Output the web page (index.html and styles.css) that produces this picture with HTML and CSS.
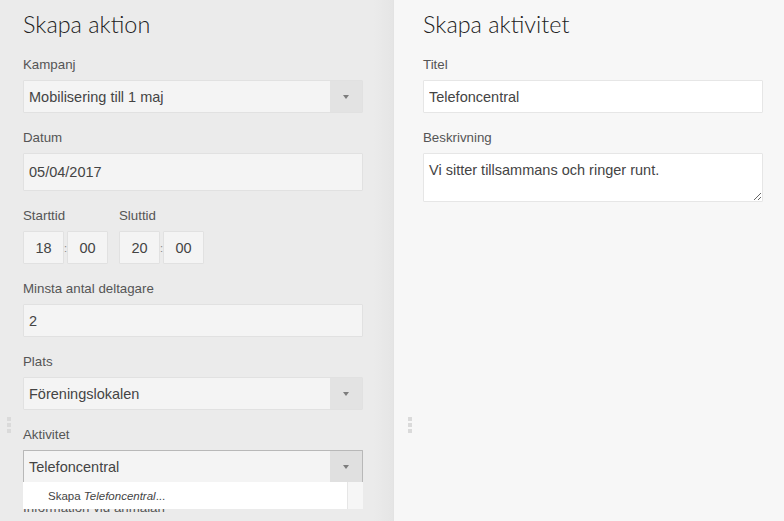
FILE: index.html
```html
<!DOCTYPE html>
<html lang="sv">
<head>
<meta charset="utf-8">
<title>Skapa aktion</title>
<link rel="stylesheet" href="styles.css">
</head>
<body>
<div class="app">
  <section class="panel panel-left">
    <div class="handle"><span></span><span></span><span></span></div>
    <h1 class="title">Skapa aktion</h1>

    <div class="field">
      <label class="label">Kampanj</label>
      <div class="select">
        <div class="select-value">Mobilisering till 1 maj</div>
        <div class="select-arrow"><span class="caret"></span></div>
      </div>
    </div>

    <div class="field">
      <label class="label">Datum</label>
      <input class="input input-date" type="text" value="05/04/2017" readonly>
    </div>

    <div class="field time-row">
      <div class="time-group">
        <label class="label">Starttid</label>
        <div class="time-inputs">
          <input class="input time-box" type="text" value="18" readonly>
          <span class="colon">:</span>
          <input class="input time-box" type="text" value="00" readonly>
        </div>
      </div>
      <div class="time-group">
        <label class="label">Sluttid</label>
        <div class="time-inputs">
          <input class="input time-box" type="text" value="20" readonly>
          <span class="colon">:</span>
          <input class="input time-box" type="text" value="00" readonly>
        </div>
      </div>
    </div>

    <div class="field">
      <label class="label">Minsta antal deltagare</label>
      <input class="input" type="text" value="2" readonly>
    </div>

    <div class="field">
      <label class="label">Plats</label>
      <div class="select">
        <div class="select-value">Föreningslokalen</div>
        <div class="select-arrow"><span class="caret"></span></div>
      </div>
    </div>

    <div class="field">
      <label class="label">Aktivitet</label>
      <div class="select select-open">
        <div class="select-value">Telefoncentral</div>
        <div class="select-arrow"><span class="caret"></span></div>
        <div class="menu">
          <div class="menu-item">Skapa <em>Telefoncentral</em>...</div>
          <div class="menu-scroll"></div>
        </div>
      </div>
    </div>

    <div class="field">
      <label class="label">Information vid anmälan</label>
    </div>
  </section>

  <section class="panel panel-right">
    <div class="handle"><span></span><span></span><span></span></div>
    <h1 class="title">Skapa aktivitet</h1>

    <div class="field">
      <label class="label">Titel</label>
      <input class="input input-white" type="text" value="Telefoncentral" readonly>
    </div>

    <div class="field">
      <label class="label">Beskrivning</label>
      <textarea class="input input-white textarea" readonly>Vi sitter tillsammans och ringer runt.</textarea>
    </div>
  </section>
</div>
</body>
</html>
```

FILE: styles.css
```css
html, body {
  margin: 0;
  padding: 0;
  height: 100%;
  overflow: hidden;
}

body {
  font-family: "Liberation Sans", Arial, sans-serif;
  color: #444;
}

.app {
  display: flex;
  height: 100%;
}

.panel {
  position: relative;
  box-sizing: border-box;
  height: 100%;
}

.panel-left {
  width: 393px;
  flex: none;
  padding: 0 30px 0 23px;
  background: linear-gradient(to right, #ebebeb 0, #ebebeb 374px, #e5e5e5 393px);
}

.panel-right {
  flex: 1;
  padding: 0 21px 0 29px;
  background: #f7f7f7;
  border-left: 1px solid #e3e3e3;
}

.handle {
  position: absolute;
  left: 7px;
  top: 417px;
  display: flex;
  flex-direction: column;
  gap: 2px;
}

.panel-right .handle {
  left: 14px;
}

.handle span {
  display: block;
  width: 4px;
  height: 4px;
  background: #dadada;
}

.title {
  margin: 0 0 20px;
  padding-top: 10px;
  font-family: Lato, "Open Sans", sans-serif;
  font-weight: 300;
  font-size: 23.4px;
  line-height: 28px;
  color: #222;
}

.field {
  margin-bottom: 18px;
}

.label {
  display: block;
  font-size: 13.3px;
  line-height: 13px;
  margin-bottom: 9px;
  color: #555;
}

.input {
  display: block;
  box-sizing: border-box;
  width: 100%;
  height: 33px;
  margin: 0;
  padding: 0 5px;
  border: 1px solid #e1e1e1;
  border-radius: 1px;
  background: #f4f4f4;
  font-family: "Liberation Sans", Arial, sans-serif;
  font-size: 14.5px;
  color: #444;
  outline: none;
}

.input-date {
  height: 38px;
}

.input-white {
  background: #fff;
  border-color: #e6e6e6;
}

.textarea {
  height: 49px;
  padding: 8px 5px 6px;
  line-height: 17px;
  resize: vertical;
}

.select {
  position: relative;
  display: flex;
  box-sizing: border-box;
  height: 33px;
  border: 1px solid #e1e1e1;
  border-radius: 1px;
  background: #f4f4f4;
}

.select-value {
  flex: 1;
  display: flex;
  align-items: center;
  padding-left: 5px;
  font-size: 14.5px;
  color: #444;
}

.select-arrow {
  width: 32px;
  display: flex;
  align-items: center;
  justify-content: center;
  background: #e3e3e3;
}

.caret {
  width: 0;
  height: 0;
  border-left: 3.5px solid transparent;
  border-right: 3.5px solid transparent;
  border-top: 4px solid #7d7d7d;
}

.select-open {
  border-color: #b8b8b8;
  border-bottom-color: #d0d0d0;
}

.select-open .select-arrow {
  background: #e0e0e0;
}

.menu {
  position: absolute;
  left: -1px;
  right: -1px;
  top: 100%;
  height: 27px;
  display: flex;
  background: #fff;
  z-index: 2;
}

.menu-item {
  flex: 1;
  display: flex;
  align-items: center;
  padding-left: 25px;
  font-size: 11.5px;
  color: #444;
}

.menu-item em {
  font-style: italic;
  margin-left: 0.28em;
}

.menu-scroll {
  width: 15px;
  background: #f6f6f6;
  border-left: 1px solid #e6e6e6;
}

.time-row {
  display: flex;
  gap: 11px;
}

.time-inputs {
  display: flex;
  align-items: center;
}

.time-box {
  width: 41px;
  padding: 0;
  text-align: center;
}

.colon {
  width: 3px;
  text-align: center;
  font-size: 11px;
  color: #888;
}
```
